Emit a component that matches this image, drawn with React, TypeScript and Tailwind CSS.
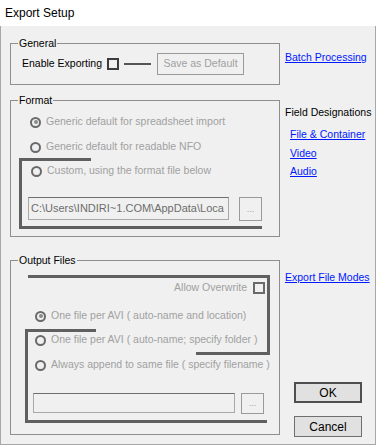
import type { ReactNode } from "react";

const FUENTE = { fontFamily: '"Liberation Sans", Arial, sans-serif' };

function Radio({ marcado = false }: { marcado?: boolean }) {
  return (
    <span className="flex h-[11px] w-[11px] shrink-0 items-center justify-center rounded-full border-2 border-[#6a6a6a] bg-[#f0f0f0]">
      {marcado && <span className="h-[4px] w-[4px] rounded-full bg-[#8a8a8a]" />}
    </span>
  );
}

function FilaRadio({ texto, marcado }: { texto: string; marcado?: boolean }) {
  return (
    <div className="flex h-[14px] items-center gap-[5px]">
      <Radio marcado={marcado} />
      <span className="whitespace-nowrap text-[#a0a0a0]">{texto}</span>
    </div>
  );
}

function Grupo({
  titulo,
  className,
  children,
}: {
  titulo: string;
  className: string;
  children: ReactNode;
}) {
  return (
    <div className={`relative border border-[#8e8e8e] ${className}`}>
      <span className="absolute -top-[8px] left-[7px] bg-[#f0f0f0] px-[1px] leading-[14px] text-black">
        {titulo}
      </span>
      {children}
    </div>
  );
}

function Enlace({ children, className = "" }: { children: ReactNode; className?: string }) {
  return (
    <a href="#" className={`block whitespace-nowrap leading-[14px] text-[#0019ff] underline ${className}`}>
      {children}
    </a>
  );
}

export default function App() {
  return (
    <div className="h-[445px] w-[376px] bg-[#f0f0f0] text-[10.5px]" style={FUENTE}>
      <div className="flex h-[26px] items-center bg-white pl-[5px] text-[12px] text-black">
        Export Setup
      </div>

      <div className="flex h-[419px] border-x border-b border-[#a8a8a8]">
        {/* columna izquierda */}
        <div className="ml-[9px] flex w-[270px] flex-col">
          <Grupo titulo="General" className="mt-[17px] h-[42px]">
            <div className="flex h-full items-center pl-[11px]">
              <span className="w-[85px] whitespace-nowrap text-black">Enable Exporting</span>
              <span className="h-[12px] w-[12px] border-2 border-[#3c3c3c] bg-[#f0f0f0]" />
              <span className="ml-[5px] h-[2px] w-[27px] bg-[#555]" />
              <button
                type="button"
                disabled
                className="ml-[6px] h-[22px] w-[87px] border border-[#9a9a9a] bg-[#f0f0f0] text-[#a0a0a0]"
              >
                Save as Default
              </button>
            </div>
          </Grupo>

          <Grupo titulo="Format" className="mt-[15px] h-[137px]">
            <div className="flex flex-col pl-[19px] pt-[14px]">
              <FilaRadio texto="Generic default for spreadsheet import" marcado />
              <div className="mt-[11px]">
                <FilaRadio texto="Generic default for readable NFO" />
              </div>
            </div>
            <div className="relative ml-[8px] mt-[4px] h-[71px] w-[243px] border-b-[3px] border-l-[3px] border-[#606060]">
              <span className="absolute -left-[3px] top-0 h-[3px] w-[72px] bg-[#606060]" />
              <div className="pl-[9px] pt-[6px]">
                <FilaRadio texto="Custom, using the format file below" />
              </div>
              <div className="mt-[19px] flex pl-[6px]">
                <div className="flex h-[23px] w-[202px] items-center overflow-hidden whitespace-nowrap border border-[#a8a8a8] border-t-[#6e6e6e] bg-[#f0f0f0] pl-[2px] text-[11px] text-[#6d6d6d]">
                  C:\Users\INDIRI~1.COM\AppData\Loca
                </div>
                <button
                  type="button"
                  disabled
                  className="ml-[10px] h-[24px] w-[23px] border border-[#9a9a9a] bg-[#f0f0f0] text-[9px] leading-none text-[#a0a0a0]"
                >
                  ...
                </button>
              </div>
            </div>
          </Grupo>

          <Grupo titulo="Output Files" className="mt-[23px] h-[175px]">
            {/* corchetes decorativos */}
            <div className="absolute left-[17px] top-[14px] h-[80px] w-[242px] border-r-[3px] border-t-[3px] border-[#606060]" />
            <div className="absolute left-[185px] top-[91px] h-[3px] w-[74px] bg-[#606060]" />
            <div className="absolute left-[14px] top-[68px] h-[94px] w-[242px] border-b-[3px] border-l-[3px] border-[#606060]" />
            <div className="absolute left-[14px] top-[68px] h-[3px] w-[71px] bg-[#606060]" />

            <div className="relative flex flex-col pt-[20px]">
              <div className="flex h-[14px] items-center justify-end gap-[6px] pr-[14px]">
                <span className="whitespace-nowrap text-[#a0a0a0]">Allow Overwrite</span>
                <span className="h-[12px] w-[12px] border-2 border-[#6a6a6a] bg-[#f0f0f0]" />
              </div>
              <div className="mt-[14px] flex flex-col pl-[24px]">
                <FilaRadio texto="One file per AVI ( auto-name and location)" marcado />
                <div className="mt-[10px]">
                  <FilaRadio texto="One file per AVI ( auto-name; specify folder )" />
                </div>
                <div className="mt-[11px]">
                  <FilaRadio texto="Always append to same file ( specify filename )" />
                </div>
              </div>
              <div className="mt-[21px] flex pl-[22px]">
                <div className="h-[20px] w-[202px] border border-[#a8a8a8] border-t-[#6e6e6e] bg-[#f0f0f0]" />
                <button
                  type="button"
                  disabled
                  className="ml-[6px] h-[21px] w-[23px] border border-[#9a9a9a] bg-[#f0f0f0] text-[9px] leading-none text-[#a0a0a0]"
                >
                  ...
                </button>
              </div>
            </div>
          </Grupo>
        </div>

        {/* columna derecha */}
        <div className="ml-[5px] flex flex-col">
          <Enlace className="mt-[24px]">Batch Processing</Enlace>
          <span className="mt-[41px] whitespace-nowrap leading-[14px] text-black">Field Designations</span>
          <div className="ml-[5px] flex flex-col">
            <Enlace className="mt-[8px]">File &amp; Container</Enlace>
            <Enlace className="mt-[5px]">Video</Enlace>
            <Enlace className="mt-[4px]">Audio</Enlace>
          </div>
          <Enlace className="mt-[92px]">Export File Modes</Enlace>
          <button
            type="button"
            className="ml-[9px] mt-[98px] h-[21px] w-[68px] border-2 border-[#4f4f4f] bg-[#e1e1e1] text-[12px] text-black"
          >
            OK
          </button>
          <button
            type="button"
            className="ml-[9px] mt-[13px] h-[21px] w-[68px] border border-[#6f6f6f] bg-[#e1e1e1] text-[12px] text-black"
          >
            Cancel
          </button>
        </div>
      </div>
    </div>
  );
}
